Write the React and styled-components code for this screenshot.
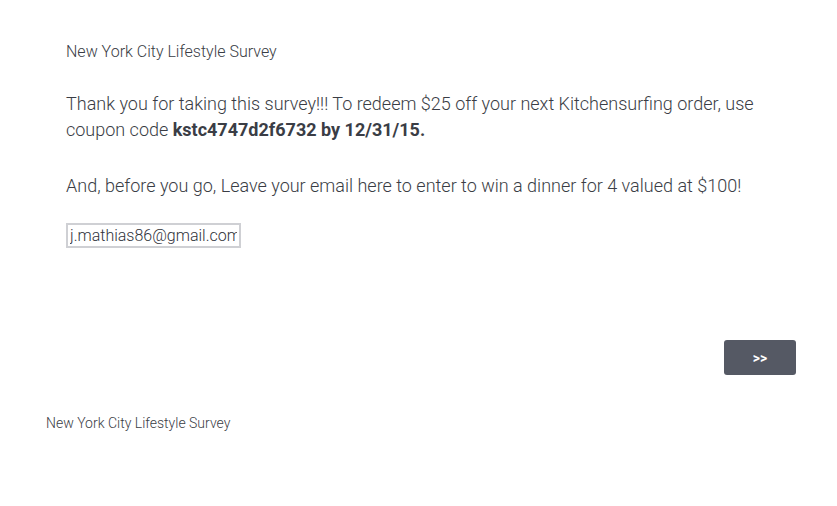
import React from "react";
import styled, { createGlobalStyle } from "styled-components";

const GlobalStyle = createGlobalStyle`
  body {
    margin: 0;
    background: #ffffff;
    font-family: Roboto, "Liberation Sans", sans-serif;
    color: #3a3d45;
  }
`;

export default function App() {
  return (
    <>
      <GlobalStyle />
      <Page>
        <Survey>
          <Title>New York City Lifestyle Survey</Title>
          <Question>
            Thank you for taking this survey!!! To redeem $25 off your next
            Kitchensurfing order, use coupon code{" "}
            <strong>kstc4747d2f6732 by 12/31/15.</strong>
          </Question>
          <Question>
            And, before you go, Leave your email here to enter to win a dinner
            for 4 valued at $100!
          </Question>
          <EmailInput type="text" defaultValue="j.mathias86@gmail.com" />
          <Buttons>
            <NextButton>&gt;&gt;</NextButton>
          </Buttons>
        </Survey>
        <Footer>New York City Lifestyle Survey</Footer>
      </Page>
    </>
  );
}

const Page = styled.div`
  width: 837px;
  min-height: 506px;
`;

const Survey = styled.div`
  padding: 42px 41px 0 66px;
`;

const Title = styled.div`
  font-size: 16px;
  font-weight: 300;
  line-height: 19px;
  color: #3a3d45;
  margin-bottom: 30px;
`;

const Question = styled.p`
  margin: 0 0 30px;
  font-size: 18px;
  font-weight: 300;
  line-height: 26px;
  color: #3a3d45;

  strong {
    font-weight: 700;
  }
`;

const EmailInput = styled.input`
  display: block;
  box-sizing: border-box;
  width: 175px;
  height: 25px;
  margin-top: -6px;
  padding: 0 2px;
  border: 2px solid #cfd0d4;
  font-family: Roboto, "Liberation Sans", sans-serif;
  font-size: 16px;
  font-weight: 300;
  color: #2f323a;
  outline: none;
`;

const Buttons = styled.div`
  display: flex;
  justify-content: flex-end;
  margin-top: 92px;
`;

const NextButton = styled.button`
  width: 72px;
  height: 35px;
  border: none;
  border-radius: 3px;
  background: #555964;
  color: #ffffff;
  font-family: Roboto, "Liberation Sans", sans-serif;
  font-size: 14px;
  font-weight: 700;
  cursor: pointer;
`;

const Footer = styled.div`
  padding: 40px 0 0 46px;
  font-size: 14px;
  font-weight: 300;
  color: #3a3d45;
`;
